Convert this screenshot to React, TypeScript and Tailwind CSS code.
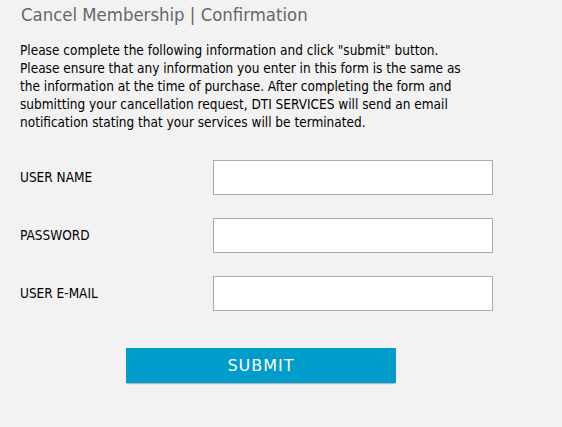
import React from 'react';

const fields = ['USER NAME', 'PASSWORD', 'USER E-MAIL'];

export default function App() {
  return (
    <div className="w-[562px] h-[427px] bg-[#f2f2f2] font-['DejaVu_Sans_Condensed','DejaVu_Sans',sans-serif] overflow-hidden">
      {/* Title */}
      <h1 className="pl-[21px] pt-[3px] text-[18.4px] leading-[24px] text-[#666666]">
        Cancel Membership | Confirmation
      </h1>

      {/* Intro text */}
      <p className="mt-[14px] pl-5 pr-8 text-[13.5px] leading-[18px] text-black">
        Please complete the following information and click "submit" button.
        <br />
        Please ensure that any information you enter in this form is the same as
        <br />
        the information at the time of purchase. After completing the form and
        <br />
        submitting your cancellation request, DTI SERVICES will send an email
        <br />
        notification stating that your services will be terminated.
      </p>

      {/* Form */}
      <form className="mt-[29px] pl-5 flex flex-col gap-[23px]">
        {fields.map((label) => (
          <div key={label} className="flex items-center">
            <label className="w-[193px] text-[13.5px] text-black">{label}</label>
            <input
              type={label === 'PASSWORD' ? 'password' : 'text'}
              className="w-[280px] h-[35px] bg-white border border-[#aaaaaa] outline-none px-2"
            />
          </div>
        ))}

        <div className="mt-[14px] pl-[106px]">
          <button
            type="button"
            className="w-[270px] h-[35px] bg-[#009ccc] text-white text-[16px] tracking-[1px] font-['DejaVu_Sans',sans-serif] shadow-[0_2px_1px_-1px_rgba(0,0,0,0.25)]"
          >
            SUBMIT
          </button>
        </div>
      </form>
    </div>
  );
}
